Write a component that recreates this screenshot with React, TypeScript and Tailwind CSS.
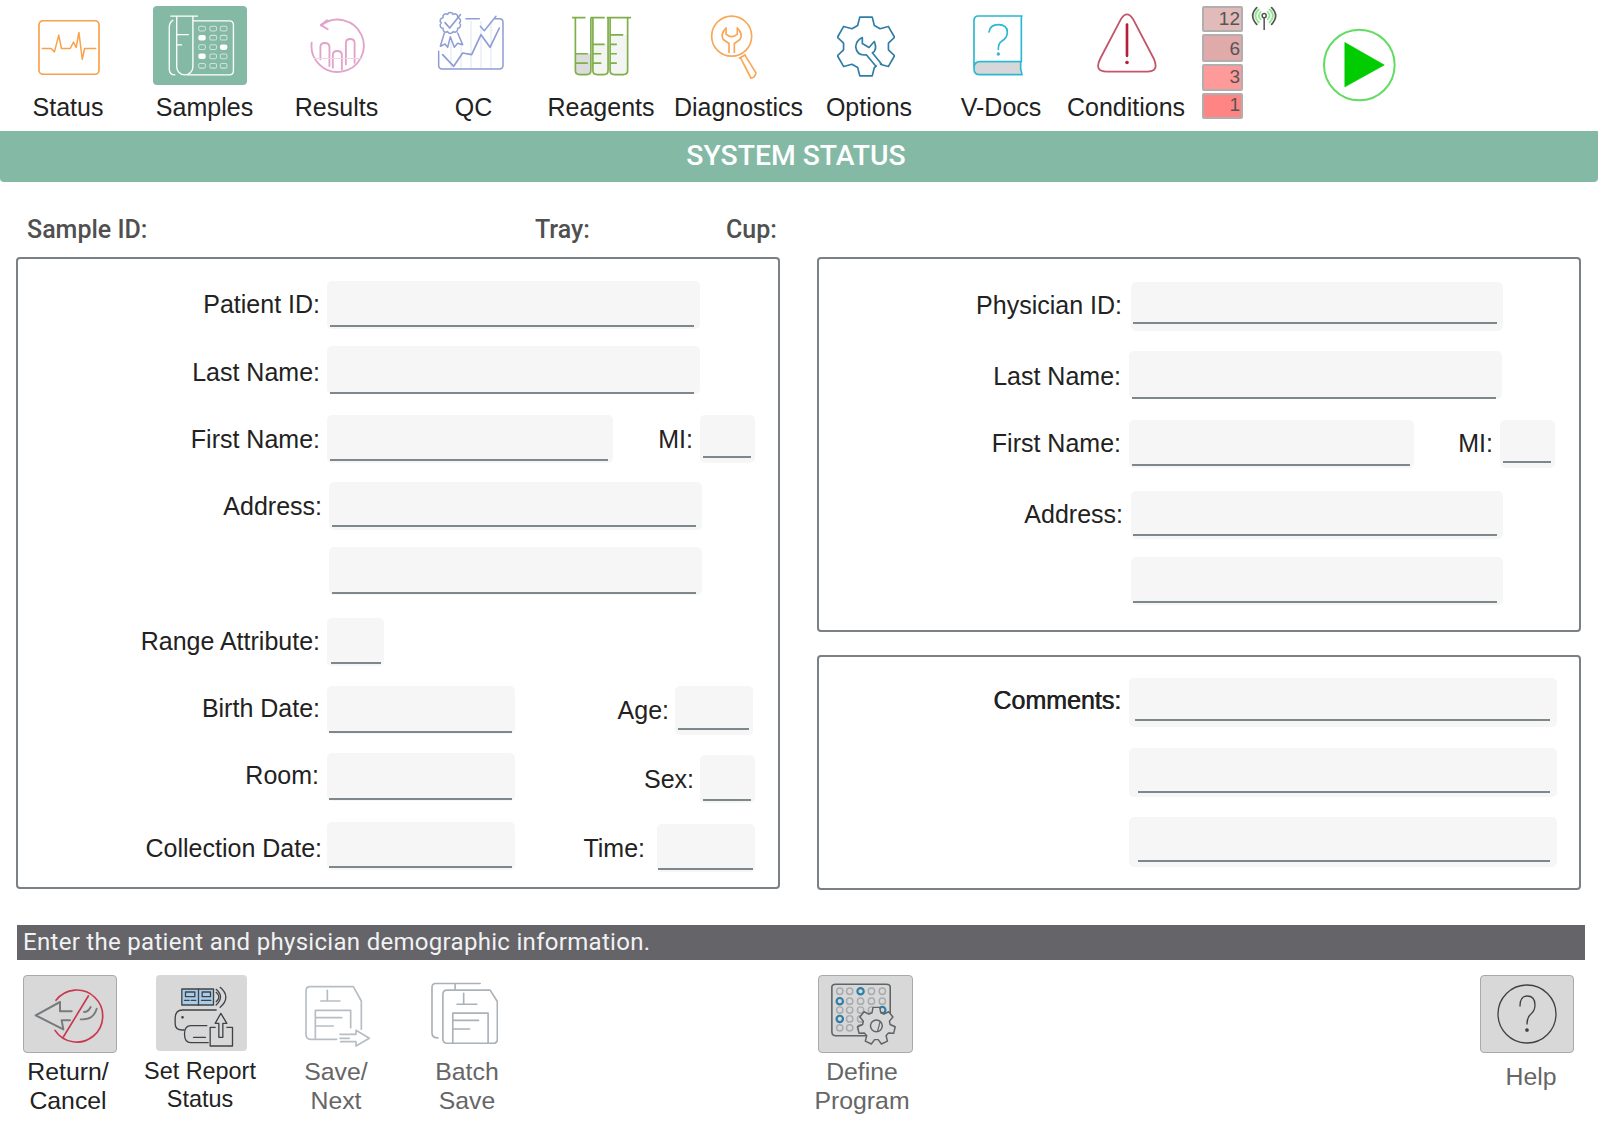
import React from "react";

const gearPath = (cx: number, cy: number, ro: number, ri: number, teeth: number, rot = 0) => {
  const pts: string[] = [];
  const step = (Math.PI * 2) / teeth;
  for (let i = 0; i < teeth; i++) {
    const a = rot + i * step;
    const p = (r: number, d: number) => `${(cx + r * Math.cos(a + d)).toFixed(1)} ${(cy + r * Math.sin(a + d)).toFixed(1)}`;
    pts.push(p(ri, -step * 0.36), p(ro, -step * 0.2), p(ro, step * 0.2), p(ri, step * 0.36));
  }
  return "M" + pts.join(" L") + " Z";
};

const scallop = (cx: number, cy: number, r: number, n: number) => {
  const step = (Math.PI * 2) / n;
  const bump = r * Math.sin(step / 2) * 1.05;
  let d = "";
  for (let i = 0; i <= n; i++) {
    const a = i * step;
    const x = (cx + r * Math.cos(a)).toFixed(1);
    const y = (cy + r * Math.sin(a)).toFixed(1);
    d += i === 0 ? `M${x} ${y}` : ` A${bump.toFixed(1)} ${bump.toFixed(1)} 0 0 1 ${x} ${y}`;
  }
  return d;
};

const StatusIcon = () => (
  <svg width="62" height="55" viewBox="112 58 183 164" fill="none" stroke="#f9a24d" strokeWidth="5" strokeLinejoin="round">
    <rect x="114" y="60" width="179" height="160" rx="13" />
    <path d="M122 143 H150 L160 153 L173 103 L181 143 H207 L217 124 L225 140 L233 95 L243 175 L250 143 H285" strokeWidth="4.5" />
  </svg>
);

const SamplesIcon = () => {
  const rows = [85, 112, 140, 167, 195];
  const cols = [597, 630, 661];
  const on = new Set(["597-112", "661-140", "597-167"]);
  return (
    <svg width="94" height="79" viewBox="452 18 278 234" fill="none" stroke="#fff" strokeWidth="4">
      <path d="M503 48 H585 M522 48 V198 A24 24 0 0 0 570 198 V48 M522 103 H558 M522 133 H538" />
      <path d="M512 60 Q500 65 500 82 V205 Q500 222 518 222" />
      <path d="M570 62 H678 Q690 62 690 74 V210 Q690 222 678 222 H552" />
      {rows.map((y) =>
        cols.map((x) =>
          on.has(`${x}-${y}`) ? (
            <rect key={`${x}-${y}`} x={x - 11} y={y - 8} width="22" height="16" rx="6" fill="#fff" stroke="none" />
          ) : (
            <rect key={`${x}-${y}`} x={x - 10} y={y - 7} width="20" height="14" rx="5" stroke="#cfe3db" strokeWidth="3" />
          )
        )
      )}
    </svg>
  );
};

const ResultsIcon = () => (
  <svg width="55" height="56" viewBox="917 52 164 166" fill="none" stroke="#e3a2ca" strokeWidth="5.5" strokeLinecap="round" strokeLinejoin="round">
    <path d="M950 74 A78 78 0 1 1 922 125" />
    <path d="M968 58 L949 72 L970 85" />
    <path d="M948 175 V138 Q948 126 961 126 Q975 126 975 138 V195" />
    <path d="M985 200 V162 Q985 150 998 150 Q1012 150 1012 162 V205" />
    <path d="M1024 190 V126 Q1024 114 1037 114 Q1050 114 1050 126 V185" />
    <path d="M930 172 H1068" stroke="#f3d5e8" strokeWidth="3" />
  </svg>
);

const QCIcon = () => (
  <svg width="80" height="72" viewBox="0 0 240 216" fill="none" stroke="#8e9dd3" strokeWidth="4.5" strokeLinejoin="round" strokeLinecap="round">
    <path d="M60 100 V183 M90 110 V183 M120 40 V183 M150 40 V183 M180 40 V183" stroke="#e0e4f4" strokeWidth="3" />
    <path d="M105 32 H145 M192 32 H205 Q216 32 216 43 V172 Q216 183 205 183 H34 Q23 183 23 172 V130" />
    <path d={scallop(58, 45, 27, 10)} />
    <path d="M42 44 L56 60 L88 20" strokeWidth="5" />
    <path d="M40 75 L28 115 L42 108 L50 118 L58 86 L70 118 L80 106 L95 110 L80 75" />
    <path d="M35 140 L68 175 L95 135 L122 140 L150 80 L177 118 L205 60" strokeWidth="5" />
    <path d="M148 55 L160 68 L195 25" />
  </svg>
);

const ReagentsIcon = () => (
  <svg width="59" height="60" viewBox="125 48 175 178" fill="none" stroke="#7fae4a" strokeWidth="5">
    <path d="M135 160 H181 V212 Q181 222 170 222 H146 Q135 222 135 212 Z" fill="#dcdcdc" stroke="none" />
    <path d="M187 132 H232 V212 Q232 222 221 222 H198 Q187 222 187 212 Z" fill="#f3f5f1" stroke="none" />
    <path d="M238 104 H290 V212 Q290 222 279 222 H249 Q238 222 238 212 Z" fill="#f3f5f3" stroke="none" />
    <path d="M125 53 H165 M180 53 H222 M228 53 H300" />
    <path d="M135 53 V210 Q135 222 148 222 H168 Q181 222 181 210 V53" />
    <path d="M187 53 V210 Q187 222 200 222 H219 Q232 222 232 210 V53" />
    <path d="M238 53 V210 Q238 222 251 222 H277 Q290 222 290 210 V53" />
    <path d="M135 160 H172 M135 188 H172 M187 132 H222 M187 160 H212 M187 188 H212 M238 104 H277 M238 132 H258 M238 160 H258 M238 188 H258" />
  </svg>
);

const DiagnosticsIcon = () => (
  <svg width="48" height="65" viewBox="530 43 144 194" fill="none" stroke="#f9a655" strokeWidth="5" strokeLinejoin="round" strokeLinecap="round">
    <circle cx="595" cy="106" r="60" />
    <path d="M578 82 Q560 100 570 116 L587 128 V155 M612 82 Q630 100 620 116 L603 128 V155" />
    <path d="M578 82 V100 Q595 115 612 100 V82" />
    <path d="M622 172 L652 230 M668 216 L636 165 M618 172 L636 162 M652 232 Q664 232 668 216" />
  </svg>
);

const OptionsIcon = () => (
  <svg width="58" height="61" viewBox="908 48 174 182" fill="none" stroke="#2f7ea6" strokeWidth="5" strokeLinejoin="round">
    <path d={gearPath(995, 139, 90, 68, 6, -Math.PI / 2)} />
    <path d="M1022 208 L1040 172 L1000 165 Q968 170 963 140 Q966 120 984 112 L984 130 L1004 142 L1020 124 Q1030 150 1014 160 L1045 205 Z" fill="#fff" stroke="none" />
    <path d="M1026 200 L996 164 Q968 168 964 140 Q966 120 984 112 V130 L1004 142 L1020 124 Q1030 150 1014 158 L1042 192" />
  </svg>
);

const VDocsIcon = () => (
  <svg width="50" height="61" viewBox="1309 43 150 183" fill="none" stroke="#2db7d1" strokeWidth="5" strokeLinejoin="round" strokeLinecap="round">
    <path d="M1330 185 H1452 V220 H1330 Q1313 220 1313 202 Q1313 185 1330 185 Z" fill="#d6d7d8" stroke="none" />
    <path d="M1456 46 H1325 Q1312 46 1312 60 V204 Q1312 222 1330 222 H1456 L1452 205 V183 H1330 Q1312 183 1312 202 M1454 46 V183" />
    <path d="M1357 94 Q1360 72 1385 72 Q1412 72 1412 95 Q1412 112 1395 122 Q1385 128 1385 146" />
    <circle cx="1385" cy="160" r="2.5" fill="#2db7d1" />
  </svg>
);

const ConditionsIcon = () => (
  <svg width="60" height="60" viewBox="170 40 182 182" fill="none" stroke="#c2566a" strokeWidth="5.5" strokeLinejoin="round">
    <path d="M243 58 Q261 30 279 58 L342 178 Q360 218 322 218 H200 Q160 218 180 178 Z" />
    <path d="M261 75 V170" stroke="#b51e39" strokeWidth="8" strokeLinecap="round" />
    <circle cx="261" cy="190" r="5.5" fill="#b51e39" stroke="none" />
  </svg>
);

const WifiIcon = () => (
  <svg width="26" height="24" viewBox="633 20 77 70" fill="none" strokeLinecap="round">
    <path d="M650 24 Q626 48 650 74 M694 24 Q718 48 694 74" stroke="#555" strokeWidth="5" />
    <path d="M656 30 Q636 48 656 68 M688 30 Q708 48 688 68" stroke="#8fe88f" strokeWidth="6" />
    <path d="M662 37 Q650 48 662 59 M682 37 Q694 48 682 59" stroke="#8fe88f" strokeWidth="5" />
    <circle cx="672" cy="48" r="6" stroke="#555" strokeWidth="4.5" />
    <path d="M672 56 V90" stroke="#555" strokeWidth="4.5" />
  </svg>
);

const PlayIcon = () => (
  <svg width="73" height="74" viewBox="850 88 217 218">
    <circle cx="958" cy="197" r="105" fill="none" stroke="#62dc62" strokeWidth="6" />
    <path d="M915 130 L1032 197 L915 262 Z" fill="#00cc00" stroke="#00cc00" strokeWidth="2" strokeLinejoin="round" />
  </svg>
);

const ReturnIcon = () => (
  <svg width="92" height="76" viewBox="12 12 276 228" fill="none" strokeLinejoin="round" strokeLinecap="round">
    <path d="M108 85 A78 78 0 1 1 105 175" stroke="#c8394f" strokeWidth="5" />
    <path d="M155 118 H120 V90 L47 130 L130 172 L125 145 H150" stroke="#777b7d" strokeWidth="6" />
    <path d="M182 142 Q220 145 230 110 M192 120 Q205 120 212 105" stroke="#777b7d" strokeWidth="5.5" />
    <path d="M205 72 L130 195" stroke="#c8394f" strokeWidth="5" />
  </svg>
);

const ReportIcon = () => (
  <svg width="91" height="76" viewBox="468 75 272 228" fill="none" stroke="#3f4347" strokeWidth="4" strokeLinejoin="round" strokeLinecap="round">
    <rect x="545" y="117" width="95" height="48" fill="#a9cce8" />
    <path d="M595 117 V165" />
    <rect x="556" y="126" width="28" height="14" />
    <rect x="606" y="126" width="25" height="14" />
    <path d="M553 151 H567 M573 151 H587 M604 151 H632" />
    <path d="M648 127 Q664 141 648 155 M648 118 Q674 141 648 165 M660 112 Q694 141 660 172" />
    <path d="M648 180 H547 Q525 180 525 205 V222 Q525 240 547 240 H552" />
    <path d="M620 227 H572 Q553 227 553 252 Q553 278 572 278 H624 M580 262 H616" />
    <circle cx="547" cy="202" r="2" fill="#3f4347" />
    <path d="M645 232 H630 V288 H697 V232 H680 M656 262 V220 H645 L662 190 L680 220 H668 V262 Z" />
  </svg>
);

const SaveIcon = () => (
  <svg width="66" height="63" viewBox="915 102 198 189" fill="none" stroke="#b7bec3" strokeWidth="5" strokeLinejoin="round" strokeLinecap="round">
    <path d="M1010 265 H932 Q918 265 918 250 V120 Q918 107 930 107 H1060 L1084 150 V235" />
    <path d="M946 262 V178 H1052 V230 M946 200 H1025 M946 225 H1000" />
    <path d="M982 118 V150 M962 150 H1020" />
    <path d="M1020 250 H1068 V238 L1108 262 L1068 285 V272 H1022 M1020 262 H1048" />
  </svg>
);

const BatchIcon = () => (
  <svg width="67" height="63" viewBox="1291 97 203 188" fill="none" stroke="#aab2b7" strokeWidth="5" strokeLinejoin="round" strokeLinecap="round">
    <path d="M1440 100 H1305 Q1294 100 1294 112 V250 Q1294 265 1312 265" />
    <path d="M1364 100 V118" />
    <path d="M1470 120 H1340 Q1327 120 1327 133 V268 Q1327 281 1340 281 H1480 Q1492 281 1492 268 V155 Z" />
    <path d="M1357 281 V190 H1464 V281 M1357 212 H1435 M1357 238 H1408" />
    <path d="M1390 130 V160 M1370 163 H1430" />
  </svg>
);

const DefineIcon = () => {
  const xs = [840, 850, 861, 872, 883];
  const ys = [991, 1001, 1010, 1019, 1028];
  const blue = new Set(["861-991", "840-1001", "883-1010", "840-1019", "872-1028"]);
  return (
    <svg width="94" height="76" viewBox="819 976 94 76" fill="none">
      <path d="M878 1036 H836 Q832 1036 832 1032 V987 Q832 984 836 984 H887 Q891 984 891 987 V1014" stroke="#5f6467" strokeWidth="1.6" />
      {ys.map((y) =>
        xs.map((x) => (
          <circle key={`${x}-${y}`} cx={x} cy={y} r="3.2" stroke={blue.has(`${x}-${y}`) ? "#2f7ea6" : "#a8acae"} strokeWidth={blue.has(`${x}-${y}`) ? 2.2 : 1.5} />
        ))
      )}
      <path d={gearPath(877, 1026, 19, 14, 7, -Math.PI / 2)} fill="#d8d8d8" stroke="#5f6467" strokeWidth="1.5" strokeLinejoin="round" />
      <circle cx="877" cy="1026" r="6" stroke="#5f6467" strokeWidth="1.5" />
      <path d="M878 1032 L881 1021" stroke="#5f6467" strokeWidth="1.2" />
    </svg>
  );
};

const HelpIcon = () => (
  <svg width="60" height="60" viewBox="0 0 60 60" fill="none" stroke="#3d4144" strokeWidth="1.3" strokeLinecap="round">
    <circle cx="30" cy="30" r="29" />
    <path d="M23 22 Q23 12 30 12 Q38 12 38 21 Q38 27 33 31 Q30 34 30 40" />
    <circle cx="30" cy="46" r="1.2" fill="#3d4144" />
  </svg>
);

function Top({ slot, shift, label, top, children }: { slot: string; shift: string; label: string; top: string; children: React.ReactNode }) {
  return (
    <div className={`flex flex-col items-center shrink-0 h-[131px] ${slot}`}>
      <div className={`h-[92px] ${top} ${shift}`}>{children}</div>
      <div className="h-[30px] leading-[30px] text-[25px] text-[#222] whitespace-nowrap">{label}</div>
    </div>
  );
}

function Label({ className, children }: { className: string; children?: React.ReactNode }) {
  return <div className={`h-[48px] leading-[48px] text-right text-[25px] text-[#222] shrink-0 whitespace-nowrap translate-x-[1px] ${className}`}>{children}</div>;
}

function Field({ className, line }: { className: string; line: string }) {
  return (
    <div className={`flex flex-col justify-end bg-[#f6f6f6] rounded-[5px] shrink-0 ${className}`}>
      <div className={`h-[2px] bg-[#7d888c] ${line}`} />
    </div>
  );
}

function Count({ n, cls }: { n: number; cls: string }) {
  return (
    <div className={`w-[41px] border-2 border-[#b3aeae] rounded-[2px] text-right pr-[1px] text-[19px] text-[#555] ${cls}`}>{n}</div>
  );
}

function Bottom({ slot, label, labelCls, children, top }: { slot: string; label: string[]; labelCls: string; children: React.ReactNode; top: string }) {
  return (
    <div className={`flex flex-col items-center shrink-0 ${slot}`}>
      <div className={`h-[78px] ${top}`}>{children}</div>
      <div className={`text-center whitespace-nowrap ${labelCls}`}>
        {label.map((l) => (
          <div key={l}>{l}</div>
        ))}
      </div>
    </div>
  );
}

const Tile = ({ children, border = true, h = "h-[78px]", w = "w-[94px]" }: { children: React.ReactNode; border?: boolean; h?: string; w?: string }) => (
  <div className={`flex items-center justify-center bg-[#d8d8d8] rounded-[4px] overflow-hidden ${w} ${h} ${border ? "border border-[#a9a9a9]" : ""}`}>{children}</div>
);

export default function App() {
  return (
    <div className="w-[1598px] h-[1122px] bg-white overflow-hidden font-['Liberation_Sans',sans-serif]">
      <div className="flex h-[131px]">
        <Top slot="w-[136px]" shift="ml-[2px]" top="pt-[20px]" label="Status"><StatusIcon /></Top>
        <Top slot="w-[137px]" shift="mr-[10px]" top="pt-[6px]" label="Samples">
          <div className="bg-[#84b9a5] rounded-[4px] w-[94px] h-[79px]"><SamplesIcon /></div>
        </Top>
        <Top slot="w-[127px]" shift="ml-[2px]" top="pt-[18px]" label="Results"><ResultsIcon /></Top>
        <Top slot="w-[147px]" shift="mr-[5px]" top="pt-[8px]" label="QC"><QCIcon /></Top>
        <Top slot="w-[108px]" shift="ml-[1px]" top="pt-[16px]" label="Reagents"><ReagentsIcon /></Top>
        <Top slot="w-[167px]" shift="mr-[9px]" top="pt-[15px]" label="Diagnostics"><DiagnosticsIcon /></Top>
        <Top slot="w-[94px]" shift="mr-[6px]" top="pt-[16px]" label="Options"><OptionsIcon /></Top>
        <Top slot="w-[170px]" shift="mr-[6px]" top="pt-[15px]" label="V-Docs"><VDocsIcon /></Top>
        <Top slot="w-[80px]" shift="ml-[2px]" top="pt-[13px]" label="Conditions"><ConditionsIcon /></Top>
        <div className="ml-[36px] mt-[6px] flex flex-col gap-[2px]">
          <Count n={12} cls="bg-[#e1baba] h-[26px] leading-[22px]" />
          <Count n={6} cls="bg-[#e1aaaa] h-[28px] leading-[25px]" />
          <Count n={3} cls="bg-[#ff9a9a] h-[27px] leading-[21px]" />
          <Count n={1} cls="bg-[#ff8585] h-[26px] leading-[19px]" />
        </div>
        <div className="ml-[8px] mt-[6px]"><WifiIcon /></div>
        <div className="ml-[46px] mt-[28px]"><PlayIcon /></div>
      </div>

      <div className="h-[51px] bg-[#84b9a5] rounded-b-[4px] flex items-center justify-center text-white font-medium text-[28.3px] font-['Roboto',sans-serif]">
        <span className="mr-[6px]">SYSTEM STATUS</span>
      </div>

      <div className="h-[75px] flex items-end pb-[12px] text-[25px] leading-[30px] text-[#505050] font-medium font-['Roboto',sans-serif]">
        <div className="ml-[27px] w-[508px]">Sample ID:</div>
        <div className="w-[191px]">Tray:</div>
        <div>Cup:</div>
      </div>

      <div className="flex items-start pl-[16px] gap-[37px]">
        <div className="w-[764px] h-[632px] border-2 border-[#7b8084] rounded-[4px] flex flex-col shrink-0">
          <div className="flex h-[48px] mt-[22px]">
            <Label className="w-[301px] -mt-[1px]">Patient ID:</Label>
            <Field className="ml-[8px] w-[373px] h-[48px]" line="ml-[3px] mr-[6px] mb-[2px]" />
          </div>
          <div className="flex h-[48px] mt-[17px]">
            <Label className="w-[301px] pt-[2px]">Last Name:</Label>
            <Field className="ml-[8px] w-[373px] h-[48px]" line="ml-[3px] mr-[6px]" />
          </div>
          <div className="flex h-[48px] mt-[21px]">
            <Label className="w-[301px]">First Name:</Label>
            <Field className="ml-[8px] w-[286px] h-[48px]" line="ml-[3px] mr-[5px] mb-[2px]" />
            <Label className="w-[79px]">MI:</Label>
            <Field className="ml-[8px] w-[55px] h-[48px]" line="ml-[3px] mr-[4px] mb-[5px]" />
          </div>
          <div className="flex h-[48px] mt-[19px]">
            <Label className="w-[303px]">Address:</Label>
            <Field className="ml-[8px] w-[373px] h-[48px]" line="ml-[3px] mr-[6px] mb-[3px]" />
          </div>
          <div className="flex h-[48px] mt-[17px]">
            <Field className="ml-[311px] w-[373px] h-[48px]" line="ml-[3px] mr-[6px] mb-[1px]" />
          </div>
          <div className="flex h-[48px] mt-[23px]">
            <Label className="w-[301px] -mt-[1px]">Range Attribute:</Label>
            <Field className="ml-[8px] w-[57px] h-[48px]" line="ml-[4px] mr-[3px] mb-[2px]" />
          </div>
          <div className="flex h-[49px] mt-[20px]">
            <Label className="w-[301px] -mt-[2px]">Birth Date:</Label>
            <Field className="ml-[8px] w-[188px] h-[48px]" line="ml-[2px] mr-[3px] mb-[1px]" />
            <Label className="w-[153px]">Age:</Label>
            <Field className="ml-[7px] w-[78px] h-[49px]" line="ml-[3px] mr-[4px] mb-[5px]" />
          </div>
          <div className="flex h-[50px] mt-[18px]">
            <Label className="w-[300px] -mt-[2px]">Room:</Label>
            <Field className="ml-[9px] w-[188px] h-[48px]" line="ml-[2px] mr-[3px] mb-[1px]" />
            <Label className="w-[178px] pt-[2px]">Sex:</Label>
            <Field className="ml-[7px] w-[55px] h-[48px] mt-[2px]" line="ml-[3px] mr-[4px] mb-[2px]" />
          </div>
          <div className="flex h-[50px] mt-[19px]">
            <Label className="w-[303px] pt-[2px]">Collection Date:</Label>
            <Field className="ml-[6px] w-[188px] h-[48px]" line="ml-[2px] mr-[3px] mb-[2px]" />
            <Label className="w-[129px] pt-[2px]">Time:</Label>
            <Field className="ml-[13px] w-[98px] h-[48px] mt-[2px]" line="ml-[1px] mr-[2px] mb-[2px]" />
          </div>
        </div>

        <div className="flex flex-col gap-[23px] w-[764px] shrink-0">
          <div className="h-[375px] border-2 border-[#7b8084] rounded-[4px] flex flex-col">
            <div className="flex h-[49px] mt-[23px]">
              <Label className="w-[302px] -mt-[1px]">Physician ID:</Label>
              <Field className="ml-[10px] w-[372px] h-[49px]" line="ml-[2px] mr-[6px] mb-[7px]" />
            </div>
            <div className="flex h-[48px] mt-[20px]">
              <Label className="w-[301px] pt-[1px]">Last Name:</Label>
              <Field className="ml-[9px] w-[373px] h-[48px]" line="ml-[3px] mr-[6px]" />
            </div>
            <div className="flex h-[48px] mt-[21px]">
              <Label className="w-[301px] -mt-[1px]">First Name:</Label>
              <Field className="ml-[9px] w-[285px] h-[48px]" line="ml-[3px] mr-[4px] mb-[2px]" />
              <Label className="w-[78px] -mt-[1px]">MI:</Label>
              <Field className="ml-[8px] w-[55px] h-[48px]" line="ml-[3px] mr-[4px] mb-[5px]" />
            </div>
            <div className="flex h-[48px] mt-[23px]">
              <Label className="w-[303px] -mt-[1px]">Address:</Label>
              <Field className="ml-[9px] w-[372px] h-[48px]" line="ml-[2px] mr-[6px] mb-[3px]" />
            </div>
            <div className="flex h-[48px] mt-[18px]">
              <Field className="ml-[312px] w-[372px] h-[48px]" line="ml-[2px] mr-[6px] mb-[2px]" />
            </div>
          </div>
          <div className="h-[235px] border-2 border-[#7b8084] rounded-[4px] flex flex-col">
            <div className="flex h-[49px] mt-[21px]">
              <Label className="w-[301px] -mt-[2px] text-[24.6px] [text-shadow:0.6px_0_0_#222]">Comments:</Label>
              <Field className="ml-[9px] w-[428px] h-[49px]" line="ml-[6px] mr-[7px] mb-[6px]" />
            </div>
            <div className="flex h-[49px] mt-[21px]">
              <Field className="ml-[310px] w-[428px] h-[49px]" line="ml-[9px] mr-[7px] mb-[4px]" />
            </div>
            <div className="flex h-[50px] mt-[20px]">
              <Field className="ml-[310px] w-[428px] h-[50px]" line="ml-[9px] mr-[7px] mb-[5px]" />
            </div>
          </div>
        </div>
      </div>

      <div className="mt-[35px] ml-[17px] w-[1568px] h-[35px] bg-[#646469] text-[#f2f2f2] text-[24px] leading-[34px] pl-[6px] tracking-[0.3px] font-['Roboto',sans-serif]">
        Enter the patient and physician demographic information.
      </div>

      <div className="flex mt-[15px] text-[24.8px] leading-[28.5px]">
        <Bottom slot="w-[136px]" top="ml-[4px]" label={["Return/", "Cancel"]} labelCls="mt-[5px] text-[#222]">
          <Tile><ReturnIcon /></Tile>
        </Bottom>
        <Bottom slot="w-[128px]" top="ml-[3px]" label={["Set Report", "Status"]} labelCls="mt-[4px] text-[#222] text-[23.4px] leading-[28px]">
          <Tile border={false} h="h-[76px]" w="w-[91px]"><ReportIcon /></Tile>
        </Bottom>
        <Bottom slot="w-[144px]" top="pt-[10px] ml-[4px]" label={["Save/", "Next"]} labelCls="mt-[5px] text-[#666]">
          <SaveIcon />
        </Bottom>
        <Bottom slot="w-[118px]" top="pt-[7px] mr-[6px]" label={["Batch", "Save"]} labelCls="mt-[5px] text-[#666]">
          <BatchIcon />
        </Bottom>
        <Bottom slot="w-[672px]" top="ml-[6px]" label={["Define", "Program"]} labelCls="mt-[5px] text-[#666]">
          <Tile w="w-[95px]"><DefineIcon /></Tile>
        </Bottom>
        <div className="w-[266px] shrink-0" />
        <Bottom slot="w-[134px]" top="mr-[8px]" label={["Help"]} labelCls="mt-[10px] text-[#666]">
          <Tile><HelpIcon /></Tile>
        </Bottom>
      </div>
    </div>
  );
}
